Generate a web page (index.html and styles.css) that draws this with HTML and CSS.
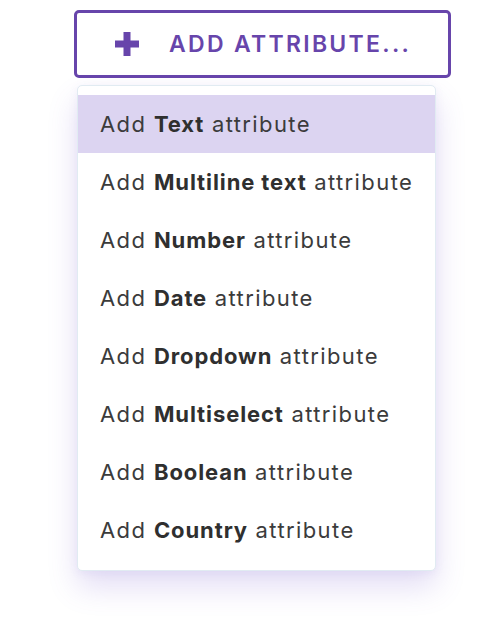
FILE: index.html
```html
<!DOCTYPE html>
<html>
<head>
<meta charset="UTF-8">
<title>Add attribute</title>
<link rel="stylesheet" href="styles.css">
</head>
<body>
<div class="wrap">
    <button class="add-btn" type="button">
        <svg class="plus" width="24" height="24" viewBox="0 0 24 24"><path d="M8.5 0h7v8.5H24v7h-8.5V24h-7v-8.5H0v-7h8.5z" fill="currentColor"/></svg>
        <span>ADD ATTRIBUTE...</span>
    </button>
    <ul class="menu">
        <li class="on">Add <b>Text</b> attribute</li>
        <li>Add <b>Multiline text</b> attribute</li>
        <li>Add <b>Number</b> attribute</li>
        <li>Add <b>Date</b> attribute</li>
        <li>Add <b>Dropdown</b> attribute</li>
        <li>Add <b>Multiselect</b> attribute</li>
        <li>Add <b>Boolean</b> attribute</li>
        <li>Add <b>Country</b> attribute</li>
    </ul>
</div>
</body>
</html>
```

FILE: styles.css
```css
*{ margin:0; padding:0; box-sizing:border-box; }
html,body{
    background:#fff;
    min-height:100%;
}
body{
    font-family:Inter,"Noto Sans",sans-serif;
}
.wrap{
    display:flex;
    flex-direction:column;
    align-items:flex-start;
    padding:10px 0 47px 74px;
}
.add-btn{
    width:377px;
    height:68px;
    border:3px solid #6745ab;
    border-radius:5px;
    background:#fff;
    color:#6745ab;
    display:flex;
    align-items:center;
    padding-left:38px;
    gap:30px;
    font-family:inherit;
    font-size:23px;
    font-weight:600;
    letter-spacing:2.3px;
}
.plus{
    display:block;
    flex:none;
}
.menu{
    list-style:none;
    margin:7px 0 0 3px;
    width:359px;
    padding:9px 0 11px;
    background:#fff;
    border:1px solid #e1ebf2;
    border-radius:5px;
    box-shadow:0 16px 30px rgba(115,85,205,.2), 0 2px 10px rgba(115,85,205,.08);
}
.menu li{
    height:58px;
    display:flex;
    align-items:center;
    padding-left:22px;
    font-size:22px;
    letter-spacing:1.4px;
    color:#3b3b3b;
    white-space:pre;
}
.menu li b{
    font-weight:700;
    letter-spacing:.9px;
    color:#2f2f2f;
}
.menu li.on{
    background:#dcd4f1;
}
```
